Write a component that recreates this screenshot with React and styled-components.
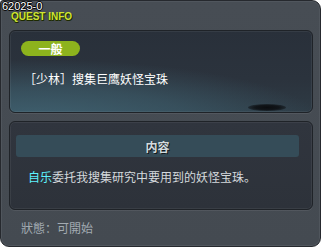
import styled, { createGlobalStyle } from "styled-components";

const GlobalStyle = createGlobalStyle`
  html, body {
    margin: 0;
    padding: 0;
    background: #ffffff;
  }
  * {
    box-sizing: border-box;
  }
`;

const CJK = `"Noto Sans CJK SC", "Noto Sans CJK TC", sans-serif`;

// outer window frame
const Window = styled.div`
  position: relative;
  width: 321px;
  height: 247px;
  border: 1px solid #26292e;
  border-radius: 3px 9px 9px 9px;
  background: linear-gradient(#474d54, #444a51);
  box-shadow: inset 0 0 0 1px #50565d;
  display: flex;
  flex-direction: column;
  padding: 0 7px 0 8px;
`;

const IdLabel = styled.div`
  position: absolute;
  left: 1px;
  top: 1px;
  font-family: "Liberation Sans", Arial, sans-serif;
  font-size: 11px;
  line-height: 9px;
  color: #ffffff;
  text-shadow: 1px 0 0 #000, -1px 0 0 #000, 0 1px 0 #000, 0 -1px 0 #000;
`;

const Header = styled.div`
  height: 29px;
  display: flex;
  align-items: flex-start;
  padding: 11px 0 0 2px;
`;

const Title = styled.div`
  font-family: "Liberation Sans", Arial, sans-serif;
  font-weight: bold;
  font-size: 10px;
  line-height: 9px;
  color: #cfe532;
  text-shadow: 1px 1px 0 #1d2a00, 0 1px 0 #1d2a00;
`;

const Panel = styled.div`
  position: relative;
  height: ${(p) => p.h}px;
  border: 1px solid #1f2328;
  border-radius: 6px;
  box-shadow: inset 0 0 0 1px rgba(255, 255, 255, 0.06),
    0 1px 0 rgba(255, 255, 255, 0.07);
  overflow: hidden;
`;

const QuestPanel = styled(Panel)`
  padding: 10px 0 0 11px;
  background: radial-gradient(
      ellipse 120% 100% at 8% 115%,
      #406271 0%,
      rgba(63, 97, 112, 0.55) 45%,
      rgba(63, 97, 112, 0) 80%
    ),
    linear-gradient(#29303a, #2b333d 60%, #2e3b45);
`;

const ContentPanel = styled(Panel)`
  margin-top: 8px;
  padding: 13px 13px 0 6px;
  background: linear-gradient(#30353e, #2d323a);
`;

const Pill = styled.div`
  width: 59px;
  height: 15px;
  border-radius: 8px;
  background: #8db31d;
  display: flex;
  align-items: center;
  justify-content: center;
  font-family: ${CJK};
  font-weight: bold;
  font-size: 12px;
  line-height: 15px;
  color: #ffffff;
`;

const QuestName = styled.div`
  margin: 15px 0 0 3px;
  font-family: ${CJK};
  font-size: 12px;
  line-height: 16px;
  color: #ffffff;
`;

const Shadow = styled.div`
  position: absolute;
  left: 238px;
  top: 73px;
  width: 38px;
  height: 7px;
  border-radius: 50%;
  background: radial-gradient(ellipse at center, #0b0d10 0%, rgba(11, 13, 16, 0.85) 45%, rgba(11, 13, 16, 0) 100%);
`;

const SectionBar = styled.div`
  height: 22px;
  border-radius: 3px;
  background: #354c58;
  display: flex;
  align-items: center;
  justify-content: center;
  font-family: ${CJK};
  font-weight: bold;
  font-size: 12px;
  color: #d3dadd;
  text-shadow: 1px 1px 0 #11181c;
`;

const Body = styled.div`
  margin: 12px 0 0 12px;
  font-family: ${CJK};
  font-size: 12px;
  line-height: 16px;
  color: #d4d9dc;
  white-space: nowrap;
`;

const Npc = styled.span`
  color: #5ef2ff;
`;

const Status = styled.div`
  margin: 10px 0 0 12px;
  font-family: ${CJK};
  font-size: 12px;
  line-height: 16px;
  color: #a2aab1;
`;

export default function App() {
  return (
    <>
      <GlobalStyle />
      <Window>
        <IdLabel>62025-0</IdLabel>
        <Header>
          <Title>QUEST INFO</Title>
        </Header>
        <QuestPanel h={83}>
          <Pill>一般</Pill>
          <QuestName>［少林］搜集巨鹰妖怪宝珠</QuestName>
          <Shadow />
        </QuestPanel>
        <ContentPanel h={89}>
          <SectionBar>内容</SectionBar>
          <Body>
            <Npc>自乐</Npc>委托我搜集研究中要用到的妖怪宝珠。
          </Body>
        </ContentPanel>
        <Status>狀態：可開始</Status>
      </Window>
    </>
  );
}
